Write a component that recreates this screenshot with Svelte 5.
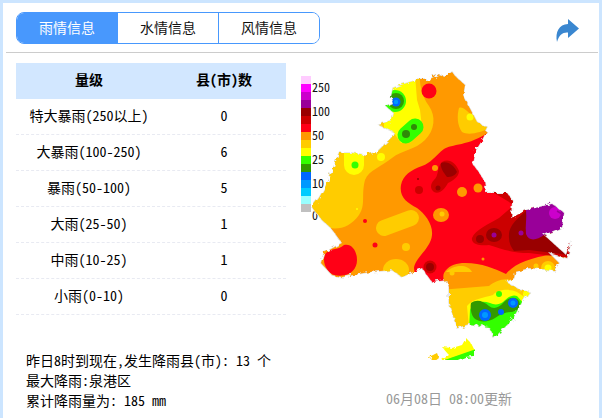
<script>
  const tabs = ['雨情信息', '水情信息', '风情信息'];
  const rows = [
    ['特大暴雨(250以上)', 0],
    ['大暴雨(100-250)', 6],
    ['暴雨(50-100)', 5],
    ['大雨(25-50)', 1],
    ['中雨(10-25)', 1],
    ['小雨(0-10)', 0]
  ];
  const legend = ['#ffccff','#ff00ff','#cc00cc','#990099','#990000','#cc0000','#ff0016','#ff9900','#ffcc00','#ffff00','#33ff00','#339900','#0066ff','#0099ff','#00ccff','#99ffff','#c0c0c0'];
  const ticks = [['250',88],['100',112],['50',136],['25',160],['10',184],['0',216]];
  const land = 'M393 120 L395 113 L388 107 L394 104 L392 97 L394 88 L405 84 L418 80 L429 80 L439 75 L446 77 L453 72 L458 78 L466 85 L464 95 L468 103 L478 122 L489 128 L482 142 L475 153 L473 163 L485 180 L487 193 L508 193 L513 200 L512 218 L528 210 L553 204 L565 213 L563 227 L545 235 L567 255 L572 241 L568 258 L550 253 L560 263 L555 270 L530 268 L516 272 L515 278 L507 282 L520 290 L530 292 L523 302 L513 320 L495 338 L490 327 L470 324 L458 328 L450 303 L450 287 L448 280 L433 282 L423 268 L403 277 L393 270 L370 272 L343 277 L333 275 L322 263 L325 253 L343 243 L332 228 L323 220 L313 207 L320 198 L330 180 L340 153 L353 153 L367 155 L378 152 L393 137 L395 132 L380 125 Z';
</script>

<div class="page">
  <header class="top">
    <nav class="tabs">
      {#each tabs as t, i}
        <button class="tab" class:active={i === 0}>{t}</button>
      {/each}
    </nav>
    <svg class="share" viewBox="0 0 26 26" width="26" height="26">
      <path d="M13 1 L24 10.5 L13 20 L13 14.5 C8 14 4 16.5 2 24 C0 14 4 6.5 13 6 Z" fill="#3a87d0"/>
    </svg>
  </header>

  <main class="body">
    <section class="left">
      <div class="thead"><span>量级</span><span>县(市)数</span></div>
      {#each rows as r}
        <div class="row"><span>{r[0]}</span><span>{r[1]}</span></div>
      {/each}
      <div class="summary">
        <p>昨日8时到现在,发生降雨县(市): 13 个</p>
        <p>最大降雨:泉港区</p>
        <p>累计降雨量为: 185 mm</p>
      </div>
    </section>

    <section class="right">
      <svg class="map" viewBox="300 60 300 300" width="300" height="300">
        <defs>
          <filter id="rough" x="-5%" y="-5%" width="110%" height="110%">
            <feTurbulence type="fractalNoise" baseFrequency="0.22" numOctaves="2" seed="4"/>
            <feDisplacementMap in="SourceGraphic" scale="6"/>
          </filter>
          <mask id="landMask" maskUnits="userSpaceOnUse" x="300" y="60" width="300" height="300">
            <g filter="url(#rough)">
              <path d={land} fill="#fff"/>
              <path d="M443 347 L453 348 L463 345 L467 338 L472 343 L475 349 L475 357 L467 358 L450 365 L443 360 L450 355 Z" fill="#fff"/>
              <path d="M432 356 L438 353 L440 358 L436 361 L431 361 Z" fill="#fff"/>
            </g>
          </mask>
        </defs>

        {#each legend as c, i}
          <rect x="302" y={76 + i * 8} width="10" height="8" fill={c}/>
        {/each}
        {#each ticks as t}
          <text x="313" y={t[1] + 4} class="tick">{t[0]}</text>
        {/each}

        <g filter="url(#rough)">
          <path d={land} fill="none" stroke="#e2e2e2" stroke-width="1.5"/>
        </g>

        <g mask="url(#landMask)">
          <rect x="300" y="60" width="300" height="300" fill="#ff9900"/>

          <!-- west and north band -->
          <path d="M420 70 C421 85 422 95 430 106 C437 116 436 130 426 140 C416 150 403 150 393 158 C382 167 370 170 366 180 C362 195 367 205 360 215 C352 226 342 230 330 228 L300 230 L300 70 Z" fill="#ffcc00"/>
          <path d="M460 108 C464 106 468 112 472 114 C478 120 484 122 492 128 C482 132 470 136 463 132 C458 125 458 115 460 108 Z" fill="#ffcc00"/>
          <circle cx="471" cy="117" r="3.5" fill="#ffff00"/>

          <!-- north yellow -->
          <path d="M385 75 L416 75 L418 100 L421 110 L423 127 L412 142 L402 143 L395 133 L385 130 Z" fill="#ffff00"/>
          <circle cx="396" cy="101" r="11" fill="#33ff00"/>
          <circle cx="397" cy="101" r="8" fill="#339900"/>
          <circle cx="397" cy="102" r="4.5" fill="#0066ff"/>
          <circle cx="397" cy="102" r="2.2" fill="#0099ff"/>
          <path d="M407 135 L416 127" stroke="#33ff00" stroke-width="17" stroke-linecap="round"/>
          <circle cx="407" cy="134" r="4" fill="#2f8a08"/>
          <circle cx="415" cy="127" r="3" fill="#2f8a08"/>
          <circle cx="430" cy="91" r="7.5" fill="#ff0016"/>

          <path d="M345 150 L365 150 L365 165 A10 10 0 0 1 345 165 Z" fill="#ffff00"/>
          <circle cx="356" cy="165" r="3.5" fill="#33ff00"/>
          <circle cx="382" cy="157" r="4" fill="#ffff00"/>
          <circle cx="410" cy="166" r="1.5" fill="#ff9900"/>
          <circle cx="358" cy="209" r="1" fill="#ffff00"/>

          <!-- central red -->
          <path d="M402 185 C404 175 412 170 423 166 C432 163 436 156 445 149 C452 144 470 146 490 132 L500 150 L600 200 L600 262 L555 254 C530 258 515 264 507 274 C495 268 480 262 463 263 C455 264 449 266 445 273 C443 278 446 283 447 290 L433 290 C425 283 415 278 415 268 C416 258 432 248 433 235 C434 224 426 214 418 208 C408 203 400 197 402 185 Z" fill="#ff0016"/>

          <path d="M443 162 C450 158 457 163 460 171 C460 177 453 181 449 183 C446 189 440 195 435 192 C431 189 431 184 435 180 C440 176 438 167 443 162 Z" fill="#cc0000"/>
          <path d="M442 163 C448 160 456 166 458 172 C456 176 452 177 448 177 C445 173 441 168 442 163 Z" fill="#990000"/>
          <circle cx="439" cy="188" r="2.5" fill="#990000"/>
          <circle cx="436" cy="168" r="3" fill="#ff9900"/>
          <circle cx="463" cy="192" r="5" fill="#ff9900"/>
          <circle cx="479" cy="188" r="4.5" fill="#ff9900"/>
          <ellipse cx="442" cy="215" rx="8" ry="7" fill="#ff9900"/>
          <circle cx="443" cy="214" r="2.5" fill="#ffcc00"/>
          <circle cx="420" cy="190" r="4" fill="#cc0000"/>
          <circle cx="419" cy="179" r="1" fill="#990000"/>
          <circle cx="431" cy="267" r="6.5" fill="#cc0000"/>
          <circle cx="431" cy="267" r="4" fill="#990000"/>
          <circle cx="484" cy="259" r="1.5" fill="#ff9900"/>

          <!-- east dark -->
          <path d="M473 238 C476 230 490 224 500 218 L515 205 L490 190 L515 190 L530 205 L575 250 L570 258 L530 253 C515 253 505 250 490 245 C480 246 472 244 473 238 Z" fill="#cc0000"/>
          <path d="M510 238 C509 228 514 222 528 210 L550 230 L570 255 L530 250 L515 251 C512 247 510 243 510 238 Z" fill="#990000"/>
          <ellipse cx="495" cy="235" rx="8" ry="7" fill="#990000"/>
          <circle cx="495" cy="235" r="2.5" fill="#990099"/>
          <circle cx="481" cy="239" r="4" fill="#990000"/>
          <circle cx="522" cy="233" r="2.5" fill="#990099"/>
          <path d="M527 210 L553 200 L575 210 L570 228 L545 235 C538 240 530 242 527 234 C526 226 528 218 527 210 Z" fill="#990099"/>
          <circle cx="556" cy="213" r="6" fill="#cc00cc"/>
          <path d="M558 211 L563 214" stroke="#990099" stroke-width="1.5"/>

          <path d="M447 272 C452 266 468 262 473 272 Z" fill="#ffcc00"/>
          <circle cx="537" cy="266" r="2.5" fill="#ffcc00"/>
          <circle cx="549" cy="268" r="7" fill="#ffcc00"/>
          <circle cx="549" cy="268" r="3.5" fill="#ffff00"/>
          <circle cx="453" cy="273" r="2.5" fill="#ffcc00"/>

          <!-- west details -->
          <path d="M385 228 L412 218" stroke="#ffcc00" stroke-width="16" stroke-linecap="round"/>
          <circle cx="366" cy="221" r="2" fill="#ff0016"/>
          <circle cx="376" cy="245" r="2.5" fill="#ff0016"/>
          <circle cx="407" cy="247" r="4" fill="#ffcc00"/>
          <ellipse cx="397" cy="270" rx="13" ry="11" fill="#ffcc00"/>
          <path d="M327 253 C332 248 340 250 345 245 C352 243 358 250 358 260 C358 270 350 278 335 275 C327 272 322 260 327 253 Z" fill="#ff0016"/>

          <!-- south -->
          <path d="M440 290 L490 286 C497 281 505 277 515 281 L540 292 L520 345 L470 345 L440 335 Z" fill="#ffcc00"/>
          <path d="M468 306 C475 298 485 298 494 295 C498 290 510 288 518 292 L530 300 L520 325 L470 328 Z" fill="#ffff00"/>
          <path d="M471 310 C474 302 483 300 491 303 C495 305 500 305 504 302 C508 298 513 294 518 296 L526 305 L515 325 L495 342 L470 330 Z" fill="#33ff00"/>
          <path d="M472 303 C478 299 484 301 490 306 C494 309 499 309 505 302 C510 297 517 296 520 301 C523 307 518 311 513 312 C508 312 502 314 496 318 C490 322 480 323 475 318 C472 314 471 308 472 303 Z" fill="#339900"/>
          <circle cx="486" cy="315" r="6" fill="#0066ff"/>
          <circle cx="486" cy="315" r="3" fill="#0099ff"/>
          <circle cx="514" cy="303" r="5" fill="#0066ff"/>
          <circle cx="514" cy="303" r="2.5" fill="#0099ff"/>
          <circle cx="502" cy="312" r="3" fill="#0066ff"/>
          <circle cx="500" cy="294" r="3" fill="#33ff00"/>
          <circle cx="528" cy="294" r="4" fill="#ffff00"/>

          <!-- islands -->
          <path d="M440 340 L480 335 L480 349 L440 362 Z" fill="#ffff00"/>
          <path d="M440 362 L480 348 L480 365 L440 370 Z" fill="#33ff00"/>
          <rect x="428" y="350" width="14" height="14" fill="#ffcc00"/>
        </g>
      </svg>
      <p class="stamp">06月08日 08:00更新</p>
    </section>
  </main>
</div>

<style>
  :global(body) { margin: 0; background: #cce5ff; }
  .page {
    margin: 3px 3px 0;
    height: 415px;
    background: #fff;
    overflow: hidden;
    font-family: "Noto Sans Mono CJK SC", "DejaVu Sans Mono", "Noto Sans CJK SC", monospace;
    font-size: 14px;
    color: #000;
  }
  .top {
    margin: 0 1px 0 3px;
    padding: 9px 17px 0 10px;
    box-sizing: border-box;
    border-bottom: 1px solid #ccc;
    display: flex;
    justify-content: space-between;
    height: 50px;
  }
  .tabs {
    display: flex;
    height: 32px;
    width: 304px;
    box-sizing: border-box;
    border: 1px solid #4898fd;
    border-radius: 8px;
    overflow: hidden;
  }
  .tab {
    flex: 1;
    border: 0;
    border-left: 1px solid #4898fd;
    background: #fff;
    padding: 0 0 2px;
    font: inherit;
    color: #111;
  }
  .tab:first-child { border-left: 0; }
  .tab.active { background: #4898fd; color: #fff; }
  .share { margin-top: 6px; }
  .body { display: flex; padding: 10px 0 0 13px; }
  .left { width: 270px; flex: none; }
  .thead, .row {
    display: grid;
    grid-template-columns: 146px 1fr;
    align-items: center;
    text-align: center;
    box-sizing: border-box;
    height: 36px;
    padding-bottom: 4px;
  }
  .thead { background: #d2e7ff; font-weight: bold; }
  .row { border-bottom: 1px dashed #e8eaf2; }
  .summary { margin: 35px 0 0 10px; }
  .summary p { margin: 0; line-height: 20px; white-space: nowrap; }
  .right { position: relative; flex: 1; margin-left: 13px; margin-top: -3px; }
  .map { display: block; }
  .tick { font-size: 12px; fill: #111; }
  .stamp { margin: 28px 0 0 87px; color: #999; white-space: nowrap; }
</style>
